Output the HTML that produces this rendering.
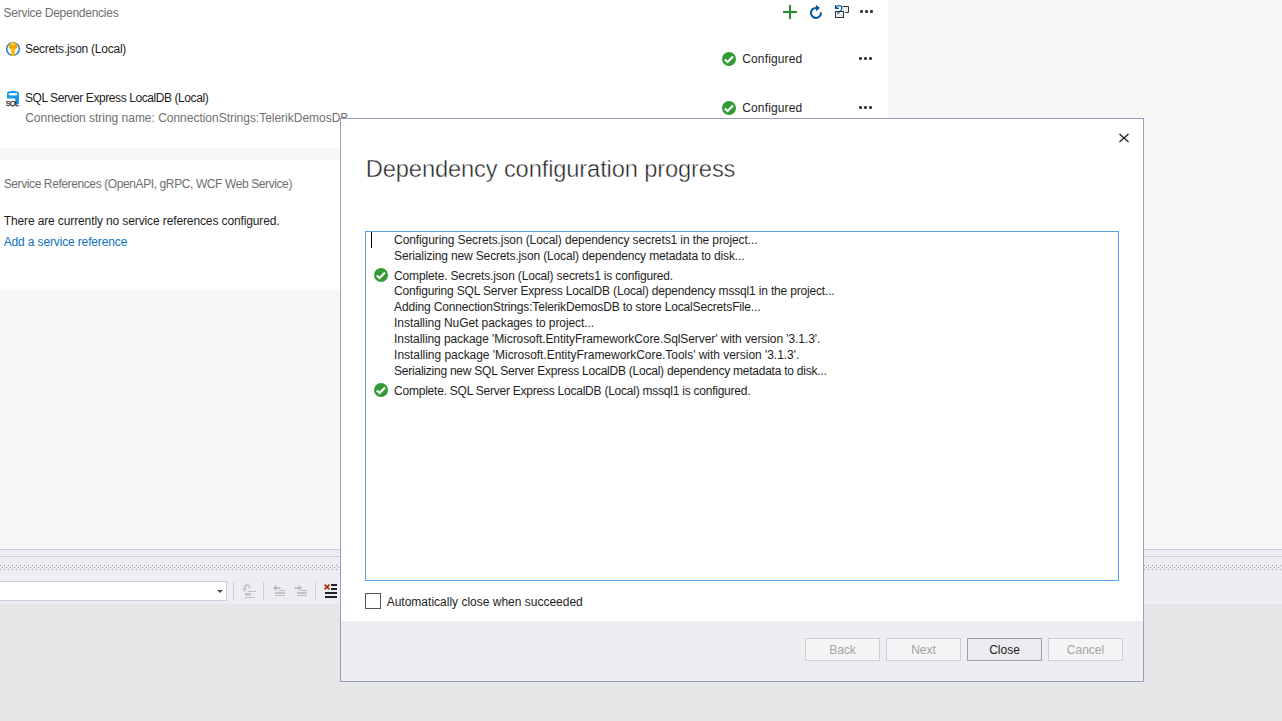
<!DOCTYPE html>
<html><head><meta charset="utf-8">
<style>
*{margin:0;padding:0;box-sizing:border-box}
html,body{width:1282px;height:721px;overflow:hidden;background:#e6e7e9;font-family:"Liberation Sans",sans-serif;}
.abs{position:absolute}
.tx{position:absolute;white-space:pre;font-family:"Liberation Sans",sans-serif;}
</style></head><body>
<!-- left panel -->
<div class="abs" style="left:0;top:0;width:888px;height:549px;background:#f7f7f7"></div>
<div class="abs" style="left:0;top:0;width:888px;height:148px;background:#fff"></div>
<div class="abs" style="left:0;top:160px;width:888px;height:130px;background:#fff"></div>
<!-- right gray -->
<div class="abs" style="left:888px;top:0;width:394px;height:549px;background:#f7f7f7"></div>
<!-- splitter band -->
<div class="abs" style="left:0;top:549px;width:1282px;height:1px;background:#cccedb"></div>
<div class="abs" style="left:0;top:550px;width:1282px;height:6px;background:#eeeef2"></div>
<div class="abs" style="left:0;top:556px;width:1282px;height:1px;background:#cccedb"></div>
<div class="abs" style="left:0;top:557px;width:1282px;height:47px;background:#eeeef2"></div>
<svg class="abs" style="left:0;top:565px" width="1282" height="5">
<defs><pattern id="dots" x="0" y="0" width="4" height="4" patternUnits="userSpaceOnUse">
<rect x="0" y="0" width="1" height="1" fill="#999"/><rect x="2" y="2" width="1" height="1" fill="#999"/>
</pattern></defs><rect width="1282" height="5" fill="url(#dots)"/></svg>
<!-- combobox -->
<div class="abs" style="left:-2px;top:581px;width:229px;height:20px;background:#fff;border:1px solid #cccedb"></div>
<svg class="abs" style="left:217px;top:590px" width="7" height="4"><path d="M0 0h6l-3 3z" fill="#505050"/></svg>
<div class="abs" style="left:233px;top:582px;width:1px;height:18px;background:#cccedb"></div>
<div class="abs" style="left:263px;top:582px;width:1px;height:18px;background:#cccedb"></div>
<div class="abs" style="left:315px;top:582px;width:1px;height:18px;background:#cccedb"></div>
<!-- key icon -->
<svg class="abs" style="left:5px;top:41px" width="16" height="16" viewBox="0 0 16 16">
<circle cx="8" cy="8" r="6.3" fill="none" stroke="#1b7fd6" stroke-width="1.5"/>
<path d="M8 1.2 C5.3 1.2 3.8 3 3.8 5 C3.8 6.8 5 8.2 6.3 8.8 V15 H9.8 V8.8 C11 8.2 12.4 6.8 12.4 5 C12.4 3 10.8 1.2 8 1.2Z" fill="#f8b50e"/>
<rect x="4" y="5.5" width="8.2" height="1.4" fill="#f09e00"/>
<rect x="7.3" y="2.2" width="1.5" height="1.2" fill="#fff8e0"/>
</svg>
<!-- sql icon -->
<svg class="abs" style="left:5px;top:90px" width="16" height="17" viewBox="0 0 16 17">
<ellipse cx="8" cy="3.3" rx="6" ry="2.6" fill="#1d9ae6"/>
<path d="M2 3.3 H14 V13.6 C14 14.2 12.6 14.6 10.2 14.6 V8.6 H2 Z" fill="#1d9ae6"/>
<ellipse cx="8" cy="4.2" rx="4.6" ry="1.2" fill="#f4f8fc"/>
<text x="0.8" y="15.8" font-family="Liberation Sans" font-size="7" fill="#1a1a1a" stroke="#1a1a1a" stroke-width="0.25" letter-spacing="-0.5">SQL</text>
</svg>
<!-- check circles -->
<svg class="abs" style="left:722px;top:52px" width="14" height="14" viewBox="0 0 14 14"><circle cx="7" cy="7" r="7" fill="#339a35"/><path d="M2.8 7.4 L5.6 10 L11 4.4" fill="none" stroke="#fff" stroke-width="2.1"/></svg>
<svg class="abs" style="left:722px;top:101px" width="14" height="14" viewBox="0 0 14 14"><circle cx="7" cy="7" r="7" fill="#339a35"/><path d="M2.8 7.4 L5.6 10 L11 4.4" fill="none" stroke="#fff" stroke-width="2.1"/></svg>
<!-- toolbar: plus -->
<svg class="abs" style="left:783px;top:5px" width="14" height="14"><rect x="6" y="0" width="2" height="14" fill="#2a8c2a"/><rect x="0" y="6" width="14" height="2" fill="#2a8c2a"/></svg>
<!-- refresh -->
<svg class="abs" style="left:808px;top:4px" width="16" height="16" viewBox="0 0 16 16">
<path d="M12.9 8.3 A5 5 0 1 1 8.2 3.9" fill="none" stroke="#00539c" stroke-width="2"/>
<path d="M8 0.9 L12 4 L8 7.2 Z" fill="#00539c"/>
</svg>
<!-- third icon -->
<svg class="abs" style="left:834px;top:4px" width="16" height="16" viewBox="0 0 16 16">
<rect x="9" y="3" width="5.5" height="5.5" fill="#eeeeee"/>
<path d="M8.5 2.5 H14.5 V8.5 H11.2" fill="none" stroke="#333" stroke-width="1"/>
<rect x="1.5" y="7.5" width="8" height="6" fill="#efefef" stroke="#333" stroke-width="1"/>
<path d="M1.6 1 V4.3 H4.8" fill="none" stroke="#0050a8" stroke-width="1.25"/>
<path d="M2.2 4 C3.2 1.6 5.5 1.2 6.6 1.8 C8 2.5 8.2 4.5 7.2 6 C6.2 7.4 4.4 8.6 3.3 9.6" fill="none" stroke="#0050a8" stroke-width="1.25"/>
</svg>
<!-- ellipses -->
<svg class="abs" style="left:860px;top:10px" width="14" height="3"><rect x="0" y="0" width="3" height="3" rx="1.2" fill="#333"/><rect x="5" y="0" width="3" height="3" rx="1.2" fill="#333"/><rect x="10" y="0" width="3" height="3" rx="1.2" fill="#333"/></svg>
<svg class="abs" style="left:859px;top:57px" width="14" height="3"><rect x="0" y="0" width="3" height="3" rx="1.2" fill="#333"/><rect x="5" y="0" width="3" height="3" rx="1.2" fill="#333"/><rect x="10" y="0" width="3" height="3" rx="1.2" fill="#333"/></svg>
<svg class="abs" style="left:859px;top:106px" width="14" height="3"><rect x="0" y="0" width="3" height="3" rx="1.2" fill="#333"/><rect x="5" y="0" width="3" height="3" rx="1.2" fill="#333"/><rect x="10" y="0" width="3" height="3" rx="1.2" fill="#333"/></svg>
<!-- bottom toolbar icons -->
<svg class="abs" style="left:242px;top:583px" width="16" height="16" viewBox="0 0 16 16">
<path d="M7.6 5.2 C7.6 1 2.6 1 2.6 5.5 V6" fill="none" stroke="#c0c0c0" stroke-width="1.5"/>
<path d="M0.3 5.2 L2.6 8.8 L4.9 5.2Z" fill="#c0c0c0"/>
<rect x="6" y="8" width="8" height="1" fill="#c0c0c0"/>
<rect x="3" y="10" width="6" height="2.6" fill="#c4c4c4"/>
<rect x="3" y="14" width="10" height="1" fill="#c0c0c0"/>
</svg>
<svg class="abs" style="left:272px;top:583px" width="16" height="16" viewBox="0 0 16 16">
<path d="M0.8 5 L4.6 1.6 V8.4 Z" fill="#c0c0c0"/><rect x="4" y="4" width="4.5" height="2" fill="#c0c0c0"/>
<rect x="7" y="7" width="6" height="1" fill="#bdbdbd"/>
<rect x="3" y="9" width="10" height="2" fill="#c4c4c4"/>
<rect x="3" y="12" width="10" height="1" fill="#bdbdbd"/>
</svg>
<svg class="abs" style="left:294px;top:583px" width="16" height="16" viewBox="0 0 16 16">
<path d="M8.2 5 L4.4 1.6 V8.4 Z" fill="#c0c0c0"/><rect x="0.5" y="4" width="4.5" height="2" fill="#c0c0c0"/>
<rect x="7" y="7" width="6" height="1" fill="#bdbdbd"/>
<rect x="3" y="9" width="10" height="2" fill="#c4c4c4"/>
<rect x="3" y="12" width="10" height="1" fill="#bdbdbd"/>
</svg>
<svg class="abs" style="left:323px;top:583px" width="16" height="16" viewBox="0 0 16 16">
<path d="M1.6 1.6 L6.4 6.4 M6.4 1.6 L1.6 6.4" stroke="#b22e10" stroke-width="1.8"/>
<rect x="8" y="1" width="6" height="2" fill="#222"/>
<rect x="8" y="5" width="6" height="2" fill="#222"/>
<rect x="2" y="9" width="12" height="2" fill="#222"/>
<rect x="2" y="13" width="12" height="2" fill="#222"/>
</svg>


<div class="tx" style="left:3.5px;top:4.5px;font-size:12px;line-height:16px;color:#6f6f6f;letter-spacing:-0.259px;">Service Dependencies</div>
<div class="tx" style="left:24.9px;top:40.5px;font-size:12px;line-height:16px;color:#1e1e1e;letter-spacing:-0.242px;">Secrets.json (Local)</div>
<div class="tx" style="left:24.9px;top:89.8px;font-size:12px;line-height:16px;color:#1e1e1e;letter-spacing:-0.419px;">SQL Server Express LocalDB (Local)</div>
<div class="tx" style="left:25.2px;top:109.8px;font-size:12px;line-height:16px;color:#6f6f6f;letter-spacing:-0.019px;">Connection string name: ConnectionStrings:TelerikDemosDB</div>
<div class="tx" style="left:3.7px;top:175.7px;font-size:12px;line-height:16px;color:#6f6f6f;letter-spacing:-0.397px;">Service References (OpenAPI, gRPC, WCF Web Service)</div>
<div class="tx" style="left:3.7px;top:212.8px;font-size:12px;line-height:16px;color:#1e1e1e;letter-spacing:-0.118px;">There are currently no service references configured.</div>
<div class="tx" style="left:3.7px;top:233.8px;font-size:12px;line-height:16px;color:#0e70c0;letter-spacing:-0.141px;">Add a service reference</div>
<!-- dialog -->
<div class="abs" style="left:340px;top:118px;width:804px;height:564px;background:#fff;border:1px solid #9b9dbe"></div>
<div class="abs" style="left:341px;top:621px;width:802px;height:60px;background:#eeeef2"></div>
<div class="abs" style="left:365px;top:231px;width:754px;height:350px;border:1px solid #55a0e6;background:#fff"></div>
<div class="abs" style="left:371px;top:232px;width:1px;height:16px;background:#000"></div>
<div class="abs" style="left:365px;top:593px;width:16px;height:16px;border:1px solid #555"></div>
<!-- buttons -->
<div class="abs btn" style="left:805px;top:638px;width:75px;height:23px;border:1px solid #cccedb;background:#f5f5f5;color:#a2a4a5;font-size:12px;line-height:21px;padding-top:1px;text-align:center">Back</div>
<div class="abs btn" style="left:886px;top:638px;width:75px;height:23px;border:1px solid #cccedb;background:#f5f5f5;color:#a2a4a5;font-size:12px;line-height:21px;padding-top:1px;text-align:center">Next</div>
<div class="abs btn" style="left:967px;top:638px;width:75px;height:23px;border:1px solid #a0a0a0;background:#ececf0;color:#1e1e1e;font-size:12px;line-height:21px;padding-top:1px;text-align:center">Close</div>
<div class="abs btn" style="left:1048px;top:638px;width:75px;height:23px;border:1px solid #cccedb;background:#f5f5f5;color:#a2a4a5;font-size:12px;line-height:21px;padding-top:1px;text-align:center">Cancel</div>
<!-- close X -->
<svg class="abs" style="left:1118px;top:132px" width="12" height="12"><path d="M1.5 2 L10.5 10 M10.5 2 L1.5 10" stroke="#1e1e1e" stroke-width="1.3"/></svg>

<svg class="abs" style="left:374px;top:268px" width="14" height="14" viewBox="0 0 14 14"><circle cx="7" cy="7" r="7" fill="#339a35"/><path d="M2.8 7.4 L5.6 10 L11 4.4" fill="none" stroke="#fff" stroke-width="2.1"/></svg>
<svg class="abs" style="left:374px;top:383px" width="14" height="14" viewBox="0 0 14 14"><circle cx="7" cy="7" r="7" fill="#339a35"/><path d="M2.8 7.4 L5.6 10 L11 4.4" fill="none" stroke="#fff" stroke-width="2.1"/></svg>

<div class="tx" style="left:742.2px;top:51.3px;font-size:12px;line-height:16px;color:#1e1e1e;letter-spacing:0.148px;">Configured</div>
<div class="tx" style="left:742.2px;top:100.3px;font-size:12px;line-height:16px;color:#1e1e1e;letter-spacing:0.148px;">Configured</div>
<div class="tx" style="left:394.1px;top:232.4px;font-size:12px;line-height:16px;color:#1e1e1e;letter-spacing:-0.099px;">Configuring Secrets.json (Local) dependency secrets1 in the project...</div>
<div class="tx" style="left:394.1px;top:248.3px;font-size:12px;line-height:16px;color:#1e1e1e;letter-spacing:-0.148px;">Serializing new Secrets.json (Local) dependency metadata to disk...</div>
<div class="tx" style="left:394.1px;top:268.2px;font-size:12px;line-height:16px;color:#1e1e1e;letter-spacing:-0.159px;">Complete. Secrets.json (Local) secrets1 is configured.</div>
<div class="tx" style="left:394.1px;top:283.3px;font-size:12px;line-height:16px;color:#1e1e1e;letter-spacing:-0.171px;">Configuring SQL Server Express LocalDB (Local) dependency mssql1 in the project...</div>
<div class="tx" style="left:394.1px;top:299.2px;font-size:12px;line-height:16px;color:#1e1e1e;letter-spacing:-0.155px;">Adding ConnectionStrings:TelerikDemosDB to store LocalSecretsFile...</div>
<div class="tx" style="left:394.1px;top:315.2px;font-size:12px;line-height:16px;color:#1e1e1e;letter-spacing:-0.071px;">Installing NuGet packages to project...</div>
<div class="tx" style="left:394.1px;top:331.2px;font-size:12px;line-height:16px;color:#1e1e1e;letter-spacing:-0.079px;">Installing package &#x27;Microsoft.EntityFrameworkCore.SqlServer&#x27; with version &#x27;3.1.3&#x27;.</div>
<div class="tx" style="left:394.1px;top:347.2px;font-size:12px;line-height:16px;color:#1e1e1e;letter-spacing:-0.036px;">Installing package &#x27;Microsoft.EntityFrameworkCore.Tools&#x27; with version &#x27;3.1.3&#x27;.</div>
<div class="tx" style="left:394.1px;top:363.2px;font-size:12px;line-height:16px;color:#1e1e1e;letter-spacing:-0.239px;">Serializing new SQL Server Express LocalDB (Local) dependency metadata to disk...</div>
<div class="tx" style="left:394.1px;top:382.8px;font-size:12px;line-height:16px;color:#1e1e1e;letter-spacing:-0.235px;">Complete. SQL Server Express LocalDB (Local) mssql1 is configured.</div>
<div class="tx" style="left:386.7px;top:593.7px;font-size:12px;line-height:16px;color:#1e1e1e;letter-spacing:-0.000px;">Automatically close when succeeded</div>
<div class="tx" style="left:365.8px;top:154.2px;font-size:23.7px;line-height:31px;color:#1e1e1e;letter-spacing:-0.135px;-webkit-text-stroke:0.45px #fff;">Dependency configuration progress</div>
</body></html>
